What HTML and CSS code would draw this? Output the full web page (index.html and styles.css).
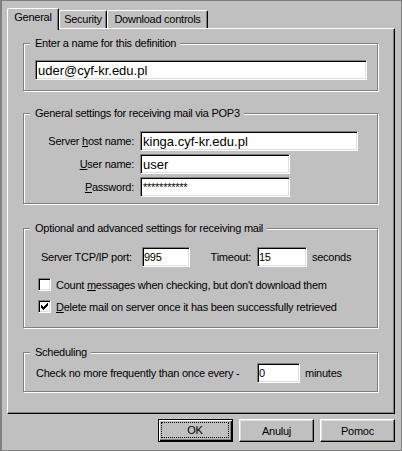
FILE: index.html
```html
<!DOCTYPE html>
<html lang="en">
<head>
    <meta charset="UTF-8">
    <title>General</title>
    <link rel="stylesheet" href="styles.css">
</head>
<body>
    <div class="dialog">
        <div class="tabs">
            <div class="tab active tab-general">General</div>
            <div class="tab tab-security">Security</div>
            <div class="tab tab-download">Download controls</div>
        </div>
        <div class="panel">
            <fieldset class="group group-name">
                <legend>Enter a name for this definition</legend>
                <div class="name-row">
                    <input type="text" class="edit edit-big edit-name" value="uder@cyf-kr.edu.pl">
                </div>
            </fieldset>

            <fieldset class="group group-pop">
                <legend>General settings for receiving mail via POP3</legend>
                <div class="pop-grid">
                    <label class="pop-label">Server <u>h</u>ost name:</label>
                    <input type="text" class="edit edit-big edit-host" value="kinga.cyf-kr.edu.pl">
                    <label class="pop-label"><u>U</u>ser name:</label>
                    <input type="text" class="edit edit-big edit-user" value="user">
                    <label class="pop-label"><u>P</u>assword:</label>
                    <input type="text" class="edit edit-user edit-pass" value="***********">
                </div>
            </fieldset>

            <fieldset class="group group-adv">
                <legend>Optional and advanced settings for receiving mail</legend>
                <div class="port-row">
                    <label class="port-label">Server TCP/IP port:</label>
                    <input type="text" class="edit edit-num edit-port" value="995">
                    <label class="timeout-label">Timeout:</label>
                    <input type="text" class="edit edit-num edit-timeout" value="15">
                    <span class="unit">seconds</span>
                </div>
                <div class="check-row first">
                    <span class="checkbox"></span>
                    <span>Count <u>m</u>essages when checking, but don't download them</span>
                </div>
                <div class="check-row">
                    <span class="checkbox">
                        <svg width="13" height="13" viewBox="0 0 13 13" shape-rendering="crispEdges">
                            <rect x="3" y="5" width="1" height="3" fill="#000"/>
                            <rect x="4" y="6" width="1" height="3" fill="#000"/>
                            <rect x="5" y="7" width="1" height="3" fill="#000"/>
                            <rect x="6" y="6" width="1" height="3" fill="#000"/>
                            <rect x="7" y="5" width="1" height="3" fill="#000"/>
                            <rect x="8" y="4" width="1" height="3" fill="#000"/>
                            <rect x="9" y="3" width="1" height="3" fill="#000"/>
                        </svg>
                    </span>
                    <span><u>D</u>elete mail on server once it has been successfully retrieved</span>
                </div>
            </fieldset>

            <fieldset class="group group-sched">
                <legend>Scheduling</legend>
                <div class="sched-row">
                    <label class="sched-label">Check no more frequently than once every -</label>
                    <input type="text" class="edit edit-num edit-minutes" value="0">
                    <span class="unit">minutes</span>
                </div>
            </fieldset>
        </div>
        <div class="buttons">
            <div class="btn default"><span class="focus">OK</span></div>
            <div class="btn"><span class="label">Anuluj</span></div>
            <div class="btn"><span class="label">Pomoc</span></div>
        </div>
    </div>
</body>
</html>
```

FILE: styles.css
```css
body {
    margin: 0;
    background-color: #c0c0c0;
    font-family: "Liberation Sans", Arial, sans-serif;
    font-size: 11px;
    letter-spacing: -0.25px;
    color: #000;
}
.dialog {
    box-sizing: border-box;
    width: 402px;
    height: 451px;
    border: 1px solid #808080;
    border-left-width: 2px;
    padding: 7px 5px 0 5px;
}

/* tabs */
.tabs {
    display: flex;
    align-items: flex-end;
    height: 20px;
}
.tab {
    box-sizing: border-box;
    height: 18px;
    border: 1px solid #fff;
    border-right-color: #000;
    border-bottom: none;
    border-radius: 2px 2px 0 0;
    box-shadow: inset -1px 0 0 #808080;
    text-align: center;
    line-height: 16px;
}
.tab.active {
    height: 22px;
    margin-bottom: -2px;
    position: relative;
    z-index: 1;
    background-color: #c0c0c0;
    line-height: 17px;
}
.tab-general {
    width: 52px;
}
.tab-security {
    width: 48px;
}
.tab-download {
    width: 101px;
}

/* page */
.panel {
    box-sizing: border-box;
    width: 388px;
    height: 386px;
    border: 1px solid;
    border-color: #fff #000 #000 #fff;
    box-shadow: inset -1px -1px 0 #808080;
    padding: 8px 16px 0 15px;
}
.group {
    margin: 0;
    padding: 0;
    min-width: 0;
    border: 1px solid #808080;
    box-shadow: 1px 1px 0 #fff, inset 1px 1px 0 #fff;
}
.group legend {
    margin-left: 6px;
    padding: 0 4px 0 5px;
    line-height: 13px;
    background-color: #c0c0c0;
}
.group-pop {
    margin-top: 16px;
}
.group-adv,
.group-sched {
    margin-top: 18px;
}

/* edit boxes */
.edit {
    box-sizing: border-box;
    height: 20px;
    margin: 0;
    border: 1px solid;
    border-color: #808080 #fff #fff #808080;
    box-shadow: inset 1px 1px 0 #000, inset -1px -1px 0 #dfdfdf;
    background-color: #fff;
    font-family: inherit;
    font-size: 11px;
    letter-spacing: inherit;
    color: #000;
    padding: 0 0 0 1px;
    outline: none;
}
.edit-big {
    font-size: 13px;
    letter-spacing: 0;
    padding-left: 2px;
}

.name-row {
    padding: 10px 0 10px 11px;
}
.edit-name {
    width: 332px;
    display: block;
}

.pop-grid {
    display: grid;
    grid-template-columns: 110px auto;
    column-gap: 6px;
    row-gap: 3px;
    align-items: center;
    justify-items: start;
    padding: 11px 0 6px 0;
}
.pop-label {
    justify-self: end;
}
.edit-host {
    width: 218px;
}
.edit-user {
    width: 150px;
}
.edit-pass {
    padding-left: 2px;
    font-size: 11px;
}

.port-row {
    display: flex;
    align-items: center;
    padding: 12px 0 0 17px;
}
.port-label {
    width: 95px;
}
.edit-num {
    margin-left: 6px;
}
.edit-port {
    width: 48px;
}
.timeout-label {
    width: 41px;
    margin-left: 20px;
    text-align: right;
}
.edit-timeout {
    width: 50px;
}
.unit {
    margin-left: 5px;
}

.check-row {
    display: flex;
    align-items: center;
    height: 13px;
    margin-top: 9px;
    padding-left: 14px;
}
.check-row.first {
    margin-top: 11px;
}
.check-row:last-child {
    margin-bottom: 14px;
}
.checkbox {
    box-sizing: border-box;
    width: 13px;
    height: 13px;
    margin-right: 5px;
    border: 1px solid;
    border-color: #808080 #fff #fff #808080;
    box-shadow: inset 1px 1px 0 #000, inset -1px -1px 0 #dfdfdf;
    background-color: #fff;
    position: relative;
}
.checkbox svg {
    position: absolute;
    left: -1px;
    top: -1px;
}

.sched-row {
    display: flex;
    align-items: center;
    padding: 4px 0 8px 12px;
}
.sched-label {
    width: 215px;
}
.edit-minutes {
    width: 43px;
}

/* buttons */
.buttons {
    display: flex;
    justify-content: flex-end;
    gap: 6px;
    width: 388px;
    margin-top: 5px;
}
.btn {
    box-sizing: border-box;
    display: flex;
    width: 75px;
    height: 23px;
    border: 1px solid;
    border-color: #fff #000 #000 #fff;
    box-shadow: inset -1px -1px 0 #808080, inset 1px 1px 0 #dfdfdf;
    background-color: #c0c0c0;
}
.btn.default {
    border-color: #000;
    box-shadow: inset 1px 1px 0 #fff, inset -1px -1px 0 #000, inset -2px -2px 0 #808080;
}
.btn .label,
.btn .focus {
    flex: 1;
    display: flex;
    align-items: center;
    justify-content: center;
}
.btn .focus {
    margin: 2px 3px 3px 2px;
    border: 1px dotted #000;
}
```
